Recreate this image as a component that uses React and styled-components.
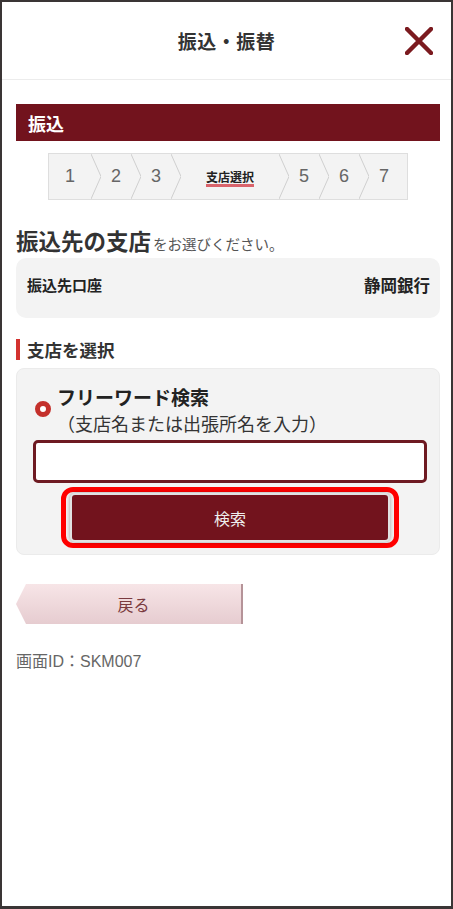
import React from 'react';
import styled, { createGlobalStyle } from 'styled-components';

const GlobalStyle = createGlobalStyle`
  body {
    margin: 0;
    background: #fff;
    font-family: "Noto Sans CJK JP", "Noto Sans", sans-serif;
  }
`;

const Frame = styled.div`
  width: 453px;
  height: 909px;
  box-sizing: border-box;
  border: 2px solid #3a3535;
  border-bottom-width: 3px;
  background: #fff;
  display: flex;
  flex-direction: column;
`;

const Header = styled.header`
  height: 77px;
  border-bottom: 1px solid #ececec;
  display: grid;
  grid-template-columns: 1fr auto 1fr;
  align-items: center;
`;

const Title = styled.h1`
  margin: 0;
  font-size: 19px;
  font-weight: 600;
  color: #333;
  letter-spacing: 0.5px;
`;

const CloseButton = styled.button`
  justify-self: end;
  margin-right: 17px;
  width: 30px;
  height: 30px;
  padding: 0;
  border: 0;
  background: none;
  display: flex;
  align-items: center;
  justify-content: center;
`;

const Content = styled.main`
  padding: 24px 11px 0 14px;
  display: flex;
  flex-direction: column;
`;

const SectionBar = styled.div`
  height: 37px;
  background: #72131d;
  color: #fff;
  font-size: 18px;
  font-weight: 700;
  padding-left: 12px;
  display: flex;
  align-items: center;
`;

const Stepper = styled.ol`
  list-style: none;
  margin: 12px auto 0;
  padding: 0;
  height: 45px;
  border: 1px solid #dedede;
  background: #f3f3f3;
  display: flex;
`;

const Step = styled.li`
  width: ${p => p.$w}px;
  box-sizing: border-box;
  padding-right: ${p => p.$pr || 0}px;
  display: flex;
  align-items: center;
  justify-content: center;
  font-family: "Liberation Sans", "Noto Sans CJK JP", sans-serif;
  font-size: 18px;
  color: #666;
`;

const ActiveStep = styled.span`
  font-family: "Noto Sans CJK JP", sans-serif;
  font-size: 12px;
  font-weight: 700;
  color: #222;
  padding-top: 2px;
  line-height: 15px;
  border-bottom: 3px solid #d9636b;
`;

const Chevron = () => (
  <svg width="10" height="45" viewBox="0 0 10 45">
    <path d="M0 0 L10 22.5 L0 45" fill="none" stroke="#cfcfcf" strokeWidth="1" />
  </svg>
);

const Lead = styled.p`
  margin: 26px 0 0;
  height: 28px;
  display: flex;
  align-items: baseline;
  color: #333;
`;

const LeadStrong = styled.span`
  font-size: 22.5px;
  line-height: 28px;
  font-weight: 700;
  margin-right: 2px;
`;

const LeadRest = styled.span`
  font-size: 14.5px;
  line-height: 28px;
  color: #555;
`;

const InfoBox = styled.div`
  margin-top: 4px;
  height: 60px;
  box-sizing: border-box;
  background: #f3f3f3;
  border-radius: 10px;
  padding: 15px 10px 0 11px;
  display: flex;
  justify-content: space-between;
  line-height: 24px;
  font-weight: 700;
  color: #222;
`;

const InfoLabel = styled.span`
  font-size: 15px;
`;

const InfoValue = styled.span`
  font-size: 16.5px;
`;

const SubHeading = styled.h2`
  margin: 21px 0 0;
  height: 21px;
  line-height: 21px;
  border-left: 4px solid #d3322f;
  padding-left: 7px;
  font-size: 17.5px;
  font-weight: 700;
  color: #333;
`;

const Panel = styled.section`
  margin-top: 8px;
  box-sizing: border-box;
  background: #f3f3f3;
  border: 1px solid #ebebeb;
  border-radius: 8px;
  padding: 15px 12px 6px 16px;
  display: flex;
  flex-direction: column;
`;

const RadioRow = styled.label`
  display: flex;
  align-items: center;
  gap: 6px;
  padding-left: 2px;
`;

const Radio = styled.span`
  width: 16px;
  height: 16px;
  box-sizing: border-box;
  border-radius: 50%;
  border: 5px solid #c4302b;
  background: #fff;
  flex: none;
  margin-top: -2px;
`;

const RadioText = styled.div`
  display: flex;
  flex-direction: column;
  color: #222;
`;

const RadioTitle = styled.span`
  font-size: 19px;
  font-weight: 700;
  line-height: 26px;
`;

const RadioNote = styled.span`
  font-size: 18px;
  line-height: 26px;
  color: #333;
`;

const SearchInput = styled.input`
  margin-top: 4px;
  height: 43px;
  box-sizing: border-box;
  border: 3px solid #6e1a22;
  border-radius: 5px;
  background: #fff;
  outline: none;
  font-size: 16px;
  padding: 0 8px;
`;

const Highlight = styled.div`
  margin: 4px auto 0;
  width: 338px;
  box-sizing: border-box;
  border: 5px solid #ff0000;
  border-radius: 12px;
  padding: 1px 4px;
  display: flex;
`;

const SearchButton = styled.button`
  flex: 1;
  height: 49px;
  box-sizing: border-box;
  border: 2px solid #e2e2e2;
  border-radius: 5px;
  background: #72131d;
  box-shadow: 0 0 4px rgba(0, 0, 0, 0.35);
  color: #eee;
  font-family: "Noto Sans CJK JP", sans-serif;
  font-size: 16px;
`;

const BackButton = styled.button`
  margin-top: 29px;
  width: 227px;
  height: 40px;
  border: 0;
  border-right: 2px solid #b59398;
  padding: 0 0 0 10px;
  clip-path: polygon(10px 0, 100% 0, 100% 100%, 10px 100%, 0 50%);
  background: linear-gradient(#f7e5e7, #e6ccd0);
  color: #7a3a40;
  font-family: "Noto Sans CJK JP", sans-serif;
  font-size: 16px;
`;

const ScreenId = styled.p`
  margin: 28px 0 0;
  line-height: 20px;
  font-family: "Liberation Sans", "Noto Sans CJK JP", sans-serif;
  font-size: 16px;
  color: #666;
`;

const steps = [
  { label: '1', w: 42 },
  { label: '2', w: 30 },
  { label: '3', w: 30 },
  { label: '支店選択', w: 98, active: true },
  { label: '5', w: 30 },
  { label: '6', w: 30 },
  { label: '7', w: 38, pr: 8 },
];

export default function App() {
  return (
    <>
      <GlobalStyle />
      <Frame>
        <Header>
          <span />
          <Title>振込・振替</Title>
          <CloseButton aria-label="閉じる">
            <svg width="28" height="28" viewBox="0 0 28 28">
              <path d="M2 2 L26 26 M26 2 L2 26" stroke="#7b1a1f" strokeWidth="4.5" strokeLinecap="round" />
            </svg>
          </CloseButton>
        </Header>
        <Content>
          <SectionBar>振込</SectionBar>
          <Stepper>
            {steps.map((s, i) => (
              <React.Fragment key={i}>
                {i > 0 && <Chevron />}
                <Step $w={s.w} $pr={s.pr}>
                  {s.active ? <ActiveStep>{s.label}</ActiveStep> : s.label}
                </Step>
              </React.Fragment>
            ))}
          </Stepper>
          <Lead>
            <LeadStrong>振込先の支店</LeadStrong>
            <LeadRest>をお選びください。</LeadRest>
          </Lead>
          <InfoBox>
            <InfoLabel>振込先口座</InfoLabel>
            <InfoValue>静岡銀行</InfoValue>
          </InfoBox>
          <SubHeading>支店を選択</SubHeading>
          <Panel>
            <RadioRow>
              <Radio />
              <RadioText>
                <RadioTitle>フリーワード検索</RadioTitle>
                <RadioNote>（支店名または出張所名を入力）</RadioNote>
              </RadioText>
            </RadioRow>
            <SearchInput type="text" />
            <Highlight>
              <SearchButton>検索</SearchButton>
            </Highlight>
          </Panel>
          <BackButton>戻る</BackButton>
          <ScreenId>画面ID：SKM007</ScreenId>
        </Content>
      </Frame>
    </>
  );
}
